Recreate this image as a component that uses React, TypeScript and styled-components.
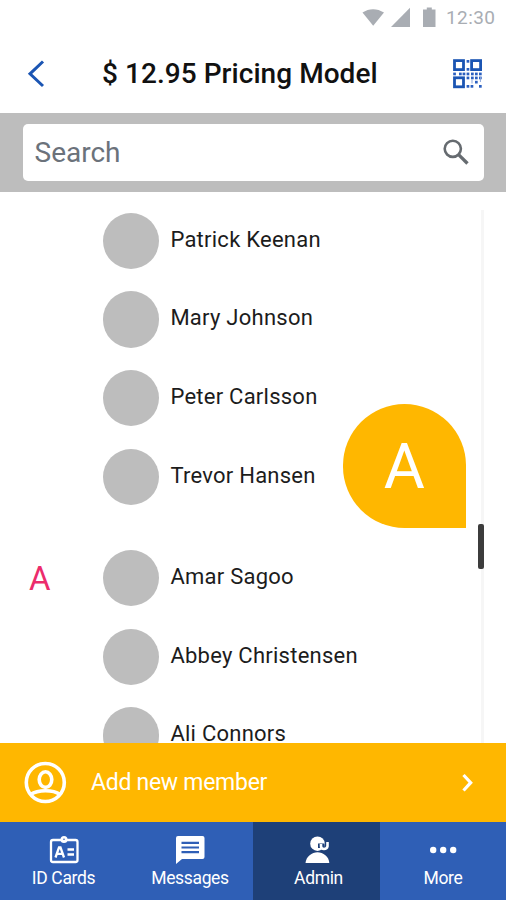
import React from "react";
import styled, { createGlobalStyle } from "styled-components";

const GlobalStyle = createGlobalStyle`
  * { box-sizing: border-box; }
  body { margin: 0; background: #fff; font-family: Roboto, "Noto Sans", sans-serif; }
`;

const Screen = styled.div`
  display: flex;
  flex-direction: column;
  width: 506px;
  height: 900px;
  overflow: hidden;
  background: #fff;
`;

const StatusBar = styled.div`
  display: flex;
  align-items: center;
  height: 35px;
  padding-left: 362px;
  flex: none;
  svg { flex: none; }
`;

const Clock = styled.span`
  margin-left: 8px;
  font-size: 19px;
  line-height: 22px;
  letter-spacing: 0.4px;
  color: #a9adb3;
`;

const Header = styled.header`
  display: grid;
  grid-template-columns: 102px 1fr 54px;
  align-items: center;
  height: 78px;
  flex: none;
`;

const IconButton = styled.button<{ $inset: number }>`
  display: flex;
  padding: 0 0 0 ${(p) => p.$inset}px;
  border: 0;
  background: none;
`;

const Title = styled.h1`
  margin: 0;
  font-size: 28px;
  line-height: 34px;
  font-weight: 500;
  letter-spacing: 0.05px;
  color: #111;
  white-space: nowrap;
`;

const SearchStrip = styled.div`
  height: 79px;
  padding: 11px 22px 11px 23px;
  background: #bdbdbd;
  flex: none;
`;

const SearchField = styled.div`
  display: flex;
  align-items: center;
  justify-content: space-between;
  height: 57px;
  padding: 0 15px 0 11.5px;
  border-radius: 5px;
  background: #fff;
  font-size: 28px;
  line-height: 34px;
  color: #6b727b;
  svg { margin-bottom: 1px; }
`;

const ListArea = styled.main`
  position: relative;
  height: 551px;
  padding-top: 20.6px;
  overflow: hidden;
  flex: none;
`;

const Group = styled.section`
  display: grid;
  grid-template-columns: 103px 1fr;
  margin-bottom: 22.6px;
`;

const GroupLetter = styled.div`
  padding-left: 29px;
  height: 56px;
  font-size: 33px;
  line-height: 58px;
  color: #ec2c6c;
`;

const Members = styled.div`
  display: flex;
  flex-direction: column;
`;

const Member = styled.div`
  display: flex;
  align-items: flex-start;
  gap: 11px;
  height: 78.7px;
`;

const Avatar = styled.div`
  width: 56.4px;
  height: 56.4px;
  border-radius: 50%;
  background: #bdbdbd;
`;

const Name = styled.span`
  font-size: 22px;
  line-height: 26px;
  padding-top: 14px;
  letter-spacing: 0.25px;
  color: #1c1c1c;
`;

const ScrollTrack = styled.div`
  position: absolute;
  top: 18px;
  bottom: 0;
  left: 481px;
  width: 3px;
  background: #f6f6f6;
`;

const ScrollThumb = styled.div`
  position: absolute;
  top: 331.5px;
  left: 478px;
  width: 6px;
  height: 45px;
  border-radius: 2px;
  background: #3c3c3c;
`;

const LetterBubble = styled.div`
  position: absolute;
  top: 212px;
  left: 342.5px;
  width: 123.7px;
  height: 123.7px;
  border-radius: 50% 50% 0 50%;
  background: #ffb700;
  color: #fff;
  font-size: 63px;
  line-height: 126px;
  text-align: center;
`;

const AddBar = styled.button`
  display: flex;
  align-items: center;
  height: 79px;
  padding: 0 32px 0 24px;
  border: 0;
  background: #ffb700;
  color: #fff;
  font: 400 23px/30px Roboto, "Noto Sans", sans-serif;
  letter-spacing: -0.28px;
  text-align: left;
  flex: none;
`;

const AddLabel = styled.span`
  flex: 1;
  margin-left: 24px;
`;

const Nav = styled.nav`
  display: grid;
  grid-template-columns: 127px 126px 127px 126px;
  height: 78px;
  background: #2f5fb6;
`;

const Tab = styled.a<{ $active?: boolean }>`
  display: flex;
  flex-direction: column;
  align-items: center;
  padding: 13px 0 0 ${(p) => (p.$active ? 4 : 0)}px;
  gap: 2px;
  background: ${(p) => (p.$active ? "#1e4078" : "transparent")};
  color: #fff;
  font-size: 17.5px;
  letter-spacing: -0.35px;
  line-height: 22px;
`;

const QR_DOTS = [
  [13.6, 1], [13.6, 9], [0.2, 13.6], [6, 13.6], [9.6, 13.6],
  [13.6, 13.6], [18, 13.6], [22, 13.6], [26, 13.6],
  [13.6, 17.6], [18, 17.6], [22, 17.6], [26, 17.6], [22, 21.8],
  [13.6, 26], [17.6, 26], [26, 26],
];

const QrIcon = () => (
  <svg width="30" height="30" viewBox="0 0 30 30" fill="none" stroke="#1b55b3" strokeWidth="2.8">
    <rect x="1.5" y="1.6" width="9" height="9" />
    <rect x="18.6" y="1.6" width="9" height="9" />
    <rect x="1.5" y="18.8" width="9" height="9" />
    {QR_DOTS.map(([x, y], i) => (
      <rect key={i} x={x} y={y} width="2.7" height="2.7" fill="#2a5fc0" stroke="none" />
    ))}
    <path d="M19 20.500v4M27.400 18v5" stroke="#8aa6dc" strokeWidth="1" />
  </svg>
);

const names1 = ["Patrick Keenan", "Mary Johnson", "Peter Carlsson", "Trevor Hansen"];
const names2 = ["Amar Sagoo", "Abbey Christensen", "Ali Connors"];

const MemberGroup = ({ letter, names }: { letter?: string; names: string[] }) => (
  <Group>
    <GroupLetter>{letter}</GroupLetter>
    <Members>
      {names.map((n) => (
        <Member key={n}>
          <Avatar />
          <Name>{n}</Name>
        </Member>
      ))}
    </Members>
  </Group>
);

export default function App() {
  return (
    <Screen>
      <GlobalStyle />
      <StatusBar>
        <svg width="76" height="22" viewBox="0 0 76 22" fill="#a9adb3">
          <path d="M.5 5.500C7 1 15 1 22 5.500L11.200 18.700z" />
          <path d="M48 .8V20H29z" />
          <path d="M62 2.500h2.800V.6h5v1.900H73.500V20H61V2.500z" />
        </svg>
        <Clock>12:30</Clock>
      </StatusBar>
      <Header>
        <IconButton $inset={26} aria-label="Back">
          <svg width="20" height="30" viewBox="0 0 20 30" fill="none" stroke="#1b55b3" strokeWidth="3">
            <path d="M17 2.500 4 14.800 17 27" />
          </svg>
        </IconButton>
        <Title>$ 12.95 Pricing Model</Title>
        <IconButton $inset={1} aria-label="QR code">
          <QrIcon />
        </IconButton>
      </Header>
      <SearchStrip>
        <SearchField>
          Search
          <svg width="26" height="26" viewBox="0 0 26 26" fill="none" stroke="#666b70" strokeWidth="2.600">
            <circle cx="9.800" cy="9.800" r="8.100" />
            <path d="M15.800 15.800 24.500 24.500" strokeWidth="3.300" />
          </svg>
        </SearchField>
      </SearchStrip>
      <ListArea>
        <MemberGroup names={names1} />
        <MemberGroup letter="A" names={names2} />
        <ScrollTrack />
        <ScrollThumb />
        <LetterBubble>A</LetterBubble>
      </ListArea>
      <AddBar>
        <svg width="43" height="43" viewBox="0 0 43 43" fill="none" stroke="#fff" strokeWidth="3.600">
          <circle cx="21.300" cy="21.500" r="19" />
          <ellipse cx="21.500" cy="18.600" rx="6.300" ry="7.800" />
          <path d="M6.500 33.500C14 28.400 29 28.400 36 33.500" />
        </svg>
        <AddLabel>Add new member</AddLabel>
        <svg width="13" height="20" viewBox="0 0 13 20" fill="none" stroke="#fff" strokeWidth="3.200">
          <path d="M2.500 2l7.200 7.700L2.500 17.500" />
        </svg>
      </AddBar>
      <Nav>
        <Tab>
          <svg width="30" height="30" viewBox="0 0 30 30" fill="none" stroke="#fff" strokeWidth="2.300">
            <rect x="2" y="5" width="26.500" height="22" rx="2" />
            <circle cx="15" cy="4.500" r="3.500" fill="#fff" stroke="none" />
            <circle cx="15" cy="4.200" r=".8" fill="#2f5fb6" stroke="none" />
            <path d="M6.500 22.500 10 12.500h1.500l3.500 10M8.500 18.800h4.500M18.500 14.500h6.500M18.500 19.500h6.500" />
          </svg>
          ID Cards
        </Tab>
        <Tab>
          <svg width="30" height="30" viewBox="0 0 30 30">
            <path d="M3 1h24.500a2 2 0 0 1 2 2v19a2 2 0 0 1-2 2H7l-6 5V3a2 2 0 0 1 2-2z" fill="#fff" />
            <path d="M6.500 7.800h17.500M6.500 12.500h17.500M6.500 17.200h17.500" stroke="#2f5fb6" strokeWidth="2.200" />
          </svg>
          Messages
        </Tab>
        <Tab $active>
          <svg width="30" height="30" viewBox="0 0 30 30" fill="#fff">
            <circle cx="13.500" cy="8.700" r="7.300" />
            <path d="M14 13V8.500h6.500V13z" fill="#1e4078" />
            <path d="M17 9v2.300q0 2.700 3 2.700t3.500-2.700V7" fill="none" stroke="#fff" strokeWidth="2.600" />
            <path d="M1.500 28C2 21.500 8 17.200 13.500 17.200S25 21.500 25.300 28z" />
          </svg>
          Admin
        </Tab>
        <Tab>
          <svg width="30" height="30" viewBox="0 0 30 30" fill="#fff">
            <circle cx="5.200" cy="15" r="3.200" />
            <circle cx="15.200" cy="15" r="3.200" />
            <circle cx="25.200" cy="15" r="3.200" />
          </svg>
          More
        </Tab>
      </Nav>
    </Screen>
  );
}
